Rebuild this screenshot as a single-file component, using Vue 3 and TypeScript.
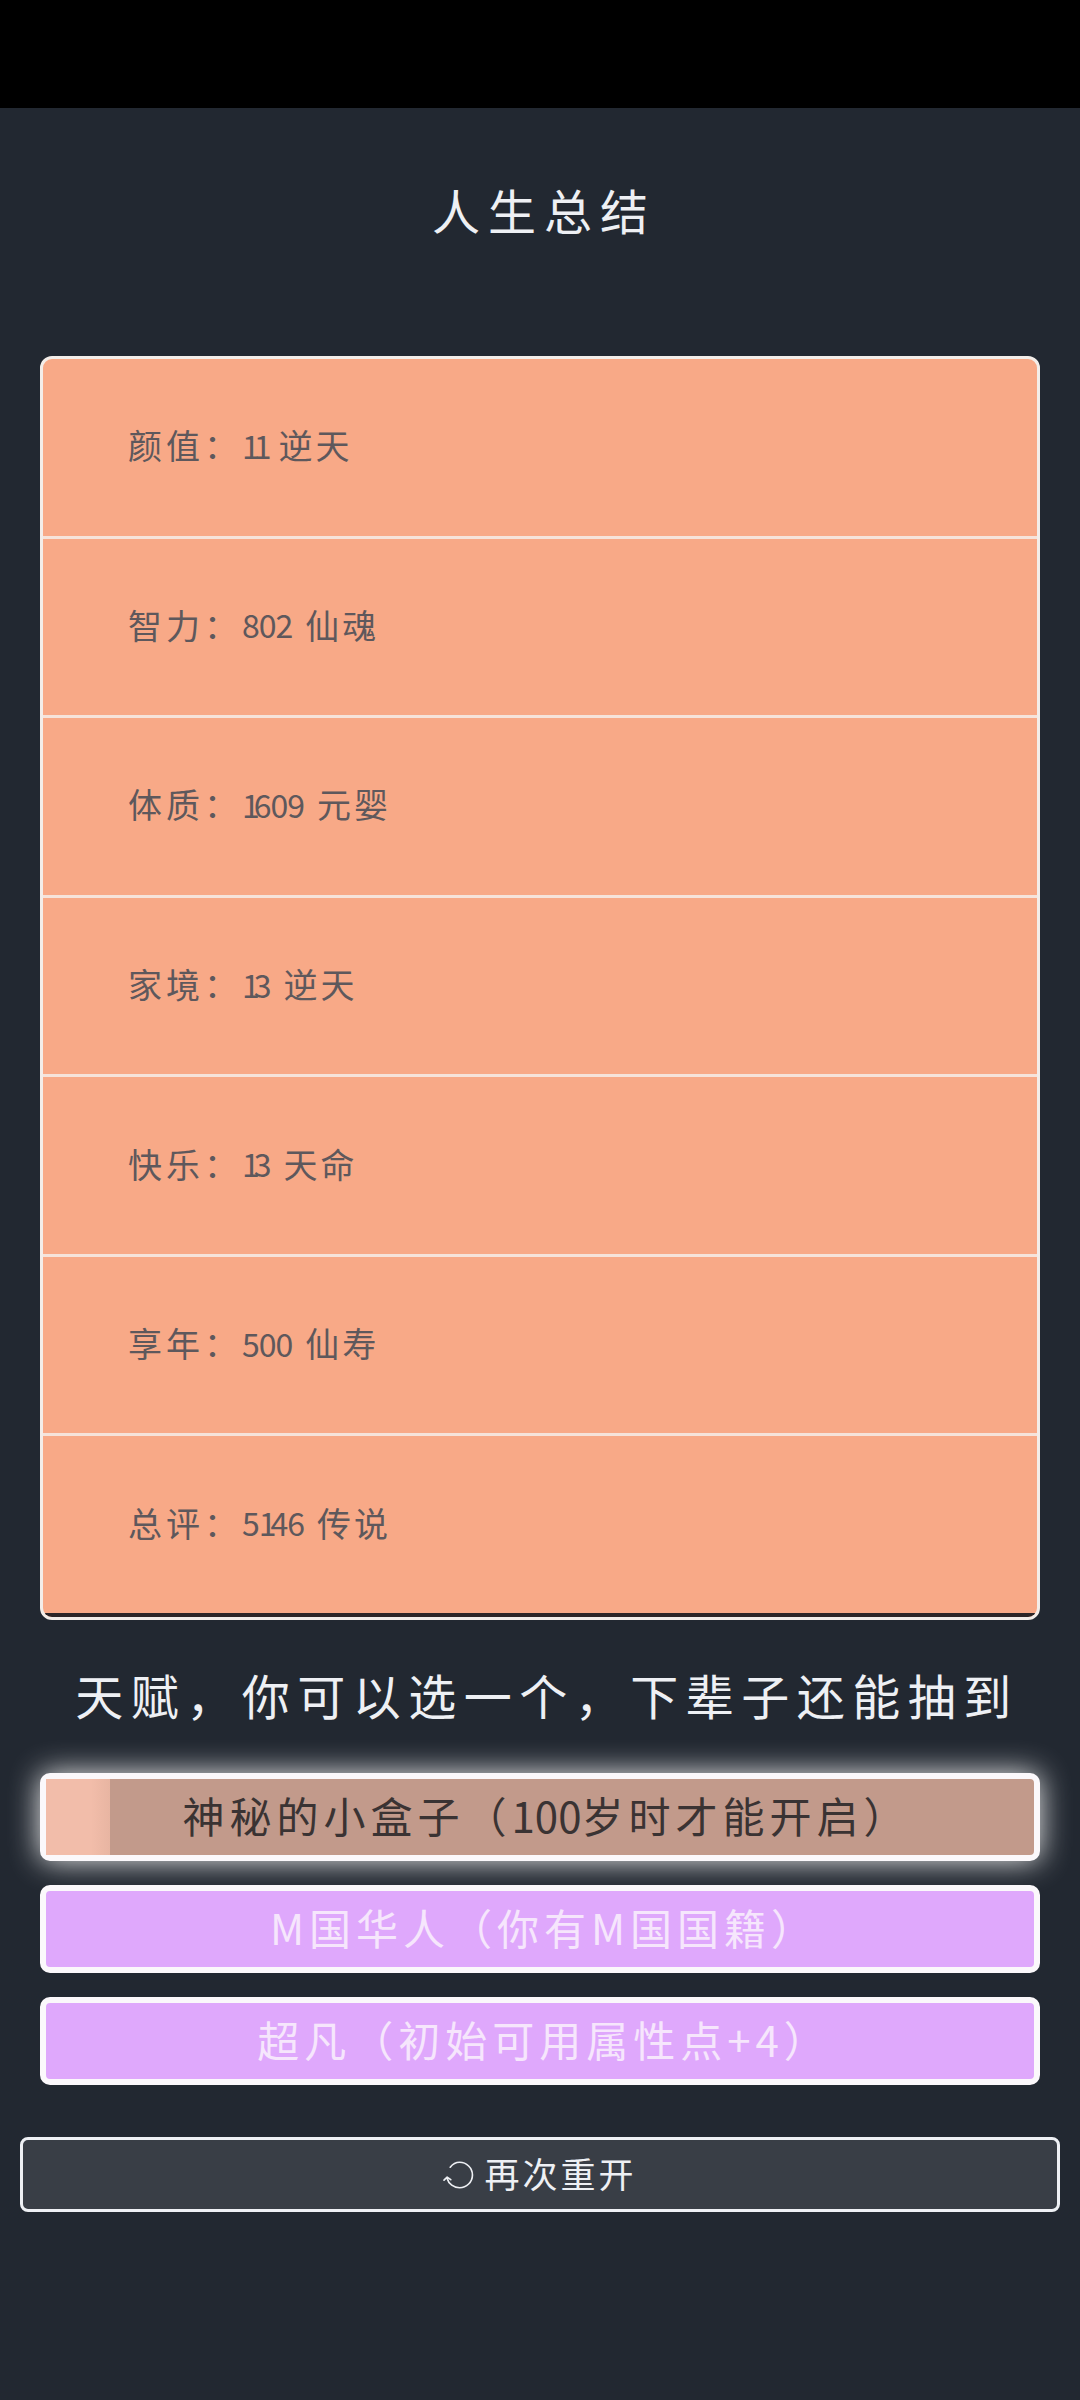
<script setup lang="ts">
interface Row {
  label: string
  value: string
  grade: string
}

const rows: Row[] = [
  { label: '颜值：', value: '11', grade: '逆天' },
  { label: '智力：', value: '802', grade: '仙魂' },
  { label: '体质：', value: '1609', grade: '元婴' },
  { label: '家境：', value: '13', grade: '逆天' },
  { label: '快乐：', value: '13', grade: '天命' },
  { label: '享年：', value: '500', grade: '仙寿' },
  { label: '总评：', value: '5146', grade: '传说' },
]
</script>

<template>
  <div class="page">
    <div class="status"></div>
    <h1 class="title">人生总结</h1>
    <section class="card">
      <div v-for="row in rows" :key="row.label" class="row">
        <span>{{ row.label }}</span>
        <span class="value"><span v-for="(digit, i) in row.value.split('')" :key="i" :class="{ one: digit === '1' }">{{ digit }}</span></span>
        <span class="grade">{{ row.grade }}</span>
      </div>
    </section>
    <h2 class="heading">天赋，你可以选一个，下辈子还能抽到</h2>
    <div class="talents">
      <div class="talent selected">
        <span class="progress"></span>
        <span class="label">神秘的小盒子（<span class="narrow">100</span>岁时才能开启）</span>
      </div>
      <div class="talent">M国华人（你有M国国籍）</div>
      <div class="talent">超凡（初始可用属性点+4）</div>
    </div>
    <button class="restart" type="button">
      <svg class="icon" viewBox="0 0 30 27" fill="none" stroke="#eef0f4" stroke-width="1.6" stroke-linecap="round" stroke-linejoin="round">
        <path d="M7 6C9.500 2.800 12.500 1.200 16 1.200c6.800 0 12.500 5.400 12.500 12.300S22.800 25.800 16 25.800c-5.600 0-10.500-3.600-12-9" />
        <path d="M1 18.500l3-3 3.500 2.500" />
      </svg>
      <span>再次重开</span>
    </button>
  </div>
</template>

<style>
html,
body {
  margin: 0;
  background: #222831;
}
</style>

<style scoped>
.page {
  box-sizing: border-box;
  width: 1080px;
  height: 2400px;
  background: #222831;
  color: #eeeeee;
  font-family: "Noto Sans CJK SC", "Noto Sans", sans-serif;
  display: flex;
  flex-direction: column;
}
.status {
  height: 108px;
  background: #000;
  flex: none;
}
.title {
  margin: 0;
  padding: 65px 0 0 8px;
  height: 180px;
  box-sizing: border-box;
  font-size: 48px;
  line-height: 72px;
  font-weight: 400;
  letter-spacing: 8px;
  text-align: center;
  color: #eef0f4;
}
.card {
  margin: 68px 40px 0;
  height: 1264px;
  box-sizing: border-box;
  border: 3px solid #f3ede9;
  border-radius: 12px;
  background: #f8a987;
  overflow: hidden;
  display: flex;
  flex-direction: column;
}
.row {
  flex: 1;
  box-sizing: border-box;
  display: flex;
  align-items: center;
  padding: 0 0 5px 85px;
  font-size: 34px;
  letter-spacing: 4px;
  color: #5e585c;
  border-bottom: 3px solid #f6e3da;
}
.row:last-child {
  border-bottom: 4px solid #2c2527;
}
.value {
  font-family: "Liberation Sans Narrow", "Noto Sans CJK SC", sans-serif;
  font-size: 32px;
  letter-spacing: -1px;
  margin-right: 13px;
}
.one {
  letter-spacing: -6px;
}
.grade {
  letter-spacing: 3px;
}
.heading {
  margin: 41px 0 0;
  padding-left: 14px;
  height: 69px;
  font-size: 48px;
  line-height: 66px;
  font-weight: 400;
  letter-spacing: 7.5px;
  text-align: center;
  white-space: nowrap;
  color: #eef0f4;
}
.talents {
  margin: 43px 40px 0;
  display: flex;
  flex-direction: column;
  gap: 24px;
}
.talent {
  position: relative;
  box-sizing: border-box;
  height: 88px;
  padding: 0 0 5px 8px;
  border: 6px solid #fbf8fb;
  border-radius: 10px;
  background: #dfa8fc;
  color: #f6e6fc;
  display: flex;
  align-items: center;
  justify-content: center;
  font-size: 42px;
  letter-spacing: 5px;
  white-space: nowrap;
}
.selected {
  background: #c29a8b;
  color: #3a3333;
  box-shadow: 0 0 30px #eeeeee;
}
.progress {
  position: absolute;
  left: 0;
  top: 0;
  bottom: 0;
  width: 64px;
  background: linear-gradient(to right, #f2bdaa 70%, #e8b5a2);
}
.label {
  position: relative;
  padding-left: 5px;
}
.narrow {
  font-family: "Liberation Sans Narrow", "Noto Sans CJK SC", sans-serif;
  letter-spacing: 0;
}
.restart {
  margin: 52px 20px 0;
  height: 75px;
  box-sizing: border-box;
  border: 3px solid #eef0f4;
  border-radius: 8px;
  background: #393e46;
  color: #eef0f4;
  font-family: inherit;
  font-size: 35px;
  letter-spacing: 3px;
  display: flex;
  align-items: center;
  justify-content: center;
  gap: 10px;
  padding: 0 0 5px;
}
.icon {
  width: 31px;
  height: 28px;
  flex: none;
  margin-top: 5px;
}
</style>
